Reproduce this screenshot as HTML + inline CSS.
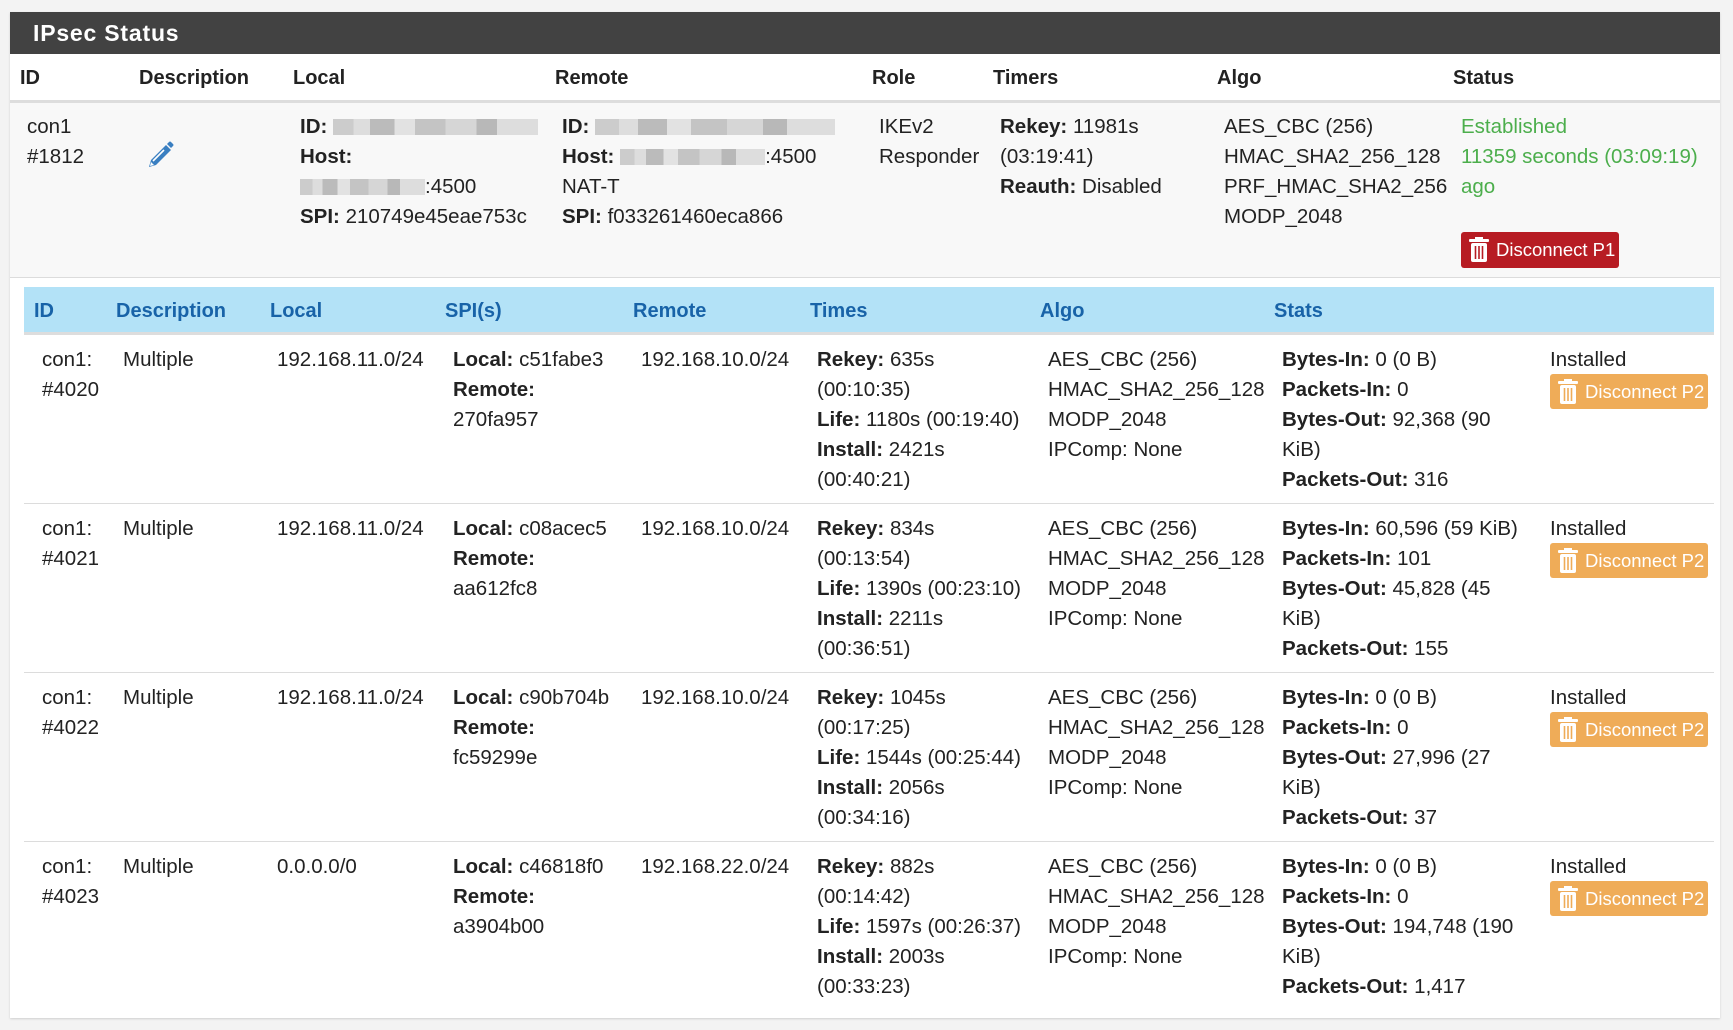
<!DOCTYPE html>
<html><head><meta charset="utf-8"><style>
body{margin:0;width:1733px;height:1030px;background:#f3f3f3;font-family:"Liberation Sans",Arial,sans-serif;color:#222;position:relative;overflow:hidden}
.a{position:absolute;white-space:nowrap;font-size:20.5px;line-height:30px;letter-spacing:0}
b{font-weight:bold}
.h{font-weight:bold;font-size:20px}
.sh{color:#1863a8;font-weight:bold;font-size:20px}
.g{color:#4cae4c}
.btn{position:absolute;border-radius:3px;color:#fff;font-size:18.5px;line-height:35px;white-space:nowrap}
.btn svg{position:absolute;left:7px;top:5px}
.bl{position:absolute;background:#dcdcdc;height:1px}
.blur{display:inline-block;height:16px;vertical-align:-2px;background:linear-gradient(90deg,#ccc 0 10%,#ddd 10% 18%,#bbb 18% 30%,#e2e2e2 30% 40%,#c4c4c4 40% 55%,#d6d6d6 55% 70%,#b8b8b8 70% 80%,#ddd 80%)}
</style></head><body>
<div style="position:absolute;left:10px;top:12px;width:1710px;height:1006px;background:#fff;box-shadow:0 1px 2px rgba(0,0,0,.15)"></div>
<div style="position:absolute;left:10px;top:12px;width:1710px;height:42px;background:#424242"></div>
<div class="a" style="left:33px;top:18px;color:#fff;font-weight:bold;font-size:23px;letter-spacing:0.8px">IPsec Status</div>
<div class="a h" style="left:20px;top:63px">ID</div>
<div class="a h" style="left:139px;top:63px">Description</div>
<div class="a h" style="left:293px;top:63px">Local</div>
<div class="a h" style="left:555px;top:63px">Remote</div>
<div class="a h" style="left:872px;top:63px">Role</div>
<div class="a h" style="left:993px;top:63px">Timers</div>
<div class="a h" style="left:1217px;top:63px">Algo</div>
<div class="a h" style="left:1453px;top:63px">Status</div>
<div style="position:absolute;left:10px;top:100px;width:1710px;height:3px;background:#ddd"></div>
<div style="position:absolute;left:10px;top:103px;width:1710px;height:174px;background:#f8f8f8"></div>
<div class="bl" style="left:10px;top:277px;width:1710px"></div>
<div class="a" style="left:27px;top:112px">con1<br>#1812</div>
<svg style="position:absolute;left:145px;top:140px" width="30" height="30" viewBox="0 0 30 30"><path d="M4 27 L6 20 L21 5 L26 10 L11 25 Z" fill="#3a7fc1"/><path d="M22 4 L24 2 Q25 1 26 2 L28 4 Q29 5 28 6 L26 8 Z" fill="#3a7fc1"/><path d="M8 21 L19 10" stroke="#fff" stroke-width="1.6"/><path d="M5 26 L6 22 L9 25 Z" fill="#fff"/></svg>
<div class="a" style="left:300px;top:112px"><b>ID:</b> <span class="blur" style="width:205px"></span><br><b>Host:</b><br><span class="blur" style="width:125px"></span>:4500<br><b>SPI:</b> 210749e45eae753c</div>
<div class="a" style="left:562px;top:112px"><b>ID:</b> <span class="blur" style="width:240px"></span><br><b>Host:</b> <span class="blur" style="width:145px"></span>:4500<br>NAT-T<br><b>SPI:</b> f033261460eca866</div>
<div class="a" style="left:879px;top:112px">IKEv2<br>Responder</div>
<div class="a" style="left:1000px;top:112px"><b>Rekey:</b> 11981s<br>(03:19:41)<br><b>Reauth:</b> Disabled</div>
<div class="a" style="left:1224px;top:112px">AES_CBC (256)<br>HMAC_SHA2_256_128<br>PRF_HMAC_SHA2_256<br>MODP_2048</div>
<div class="a g" style="left:1461px;top:112px">Established<br>11359 seconds (03:09:19)<br>ago</div>
<div class="btn" style="left:1461px;top:232px;width:158px;height:36px;background:#b71c23"><svg width="22" height="26" viewBox="0 0 22 26"><rect x="7" y="0" width="8" height="3" fill="#fff"/><rect x="1" y="2" width="20" height="3" rx="1" fill="#fff"/><rect x="3" y="6" width="16" height="19" rx="2" fill="#fff"/><path d="M7.5 9v13M11 9v13M14.5 9v13" stroke="#b71c23" stroke-width="1.6"/></svg><span style="position:absolute;left:35px">Disconnect P1</span></div>

<div style="position:absolute;left:24px;top:287px;width:1690px;height:45px;background:#b3e2f7"></div>
<div style="position:absolute;left:24px;top:332px;width:1690px;height:3px;background:#ddd"></div>
<div class="a sh" style="left:34px;top:296px">ID</div>
<div class="a sh" style="left:116px;top:296px">Description</div>
<div class="a sh" style="left:270px;top:296px">Local</div>
<div class="a sh" style="left:445px;top:296px">SPI(s)</div>
<div class="a sh" style="left:633px;top:296px">Remote</div>
<div class="a sh" style="left:810px;top:296px">Times</div>
<div class="a sh" style="left:1040px;top:296px">Algo</div>
<div class="a sh" style="left:1274px;top:296px">Stats</div>

<div class="bl" style="left:24px;top:503px;width:1690px"></div>
<div class="bl" style="left:24px;top:672px;width:1690px"></div>
<div class="bl" style="left:24px;top:841px;width:1690px"></div>

<div class="a" style="left:42px;top:345px">con1:<br>#4020</div>
<div class="a" style="left:123px;top:345px">Multiple</div>
<div class="a" style="left:277px;top:345px">192.168.11.0/24</div>
<div class="a" style="left:453px;top:345px"><b>Local:</b> c51fabe3<br><b>Remote:</b><br>270fa957</div>
<div class="a" style="left:641px;top:345px">192.168.10.0/24</div>
<div class="a" style="left:817px;top:345px"><b>Rekey:</b> 635s<br>(00:10:35)<br><b>Life:</b> 1180s (00:19:40)<br><b>Install:</b> 2421s<br>(00:40:21)</div>
<div class="a" style="left:1048px;top:345px">AES_CBC (256)<br>HMAC_SHA2_256_128<br>MODP_2048<br>IPComp: None</div>
<div class="a" style="left:1282px;top:345px"><b>Bytes-In:</b> 0 (0 B)<br><b>Packets-In:</b> 0<br><b>Bytes-Out:</b> 92,368 (90<br>KiB)<br><b>Packets-Out:</b> 316</div>
<div class="a" style="left:1550px;top:345px">Installed</div>

<div class="a" style="left:42px;top:514px">con1:<br>#4021</div>
<div class="a" style="left:123px;top:514px">Multiple</div>
<div class="a" style="left:277px;top:514px">192.168.11.0/24</div>
<div class="a" style="left:453px;top:514px"><b>Local:</b> c08acec5<br><b>Remote:</b><br>aa612fc8</div>
<div class="a" style="left:641px;top:514px">192.168.10.0/24</div>
<div class="a" style="left:817px;top:514px"><b>Rekey:</b> 834s<br>(00:13:54)<br><b>Life:</b> 1390s (00:23:10)<br><b>Install:</b> 2211s<br>(00:36:51)</div>
<div class="a" style="left:1048px;top:514px">AES_CBC (256)<br>HMAC_SHA2_256_128<br>MODP_2048<br>IPComp: None</div>
<div class="a" style="left:1282px;top:514px"><b>Bytes-In:</b> 60,596 (59 KiB)<br><b>Packets-In:</b> 101<br><b>Bytes-Out:</b> 45,828 (45<br>KiB)<br><b>Packets-Out:</b> 155</div>
<div class="a" style="left:1550px;top:514px">Installed</div>

<div class="a" style="left:42px;top:683px">con1:<br>#4022</div>
<div class="a" style="left:123px;top:683px">Multiple</div>
<div class="a" style="left:277px;top:683px">192.168.11.0/24</div>
<div class="a" style="left:453px;top:683px"><b>Local:</b> c90b704b<br><b>Remote:</b><br>fc59299e</div>
<div class="a" style="left:641px;top:683px">192.168.10.0/24</div>
<div class="a" style="left:817px;top:683px"><b>Rekey:</b> 1045s<br>(00:17:25)<br><b>Life:</b> 1544s (00:25:44)<br><b>Install:</b> 2056s<br>(00:34:16)</div>
<div class="a" style="left:1048px;top:683px">AES_CBC (256)<br>HMAC_SHA2_256_128<br>MODP_2048<br>IPComp: None</div>
<div class="a" style="left:1282px;top:683px"><b>Bytes-In:</b> 0 (0 B)<br><b>Packets-In:</b> 0<br><b>Bytes-Out:</b> 27,996 (27<br>KiB)<br><b>Packets-Out:</b> 37</div>
<div class="a" style="left:1550px;top:683px">Installed</div>

<div class="a" style="left:42px;top:852px">con1:<br>#4023</div>
<div class="a" style="left:123px;top:852px">Multiple</div>
<div class="a" style="left:277px;top:852px">0.0.0.0/0</div>
<div class="a" style="left:453px;top:852px"><b>Local:</b> c46818f0<br><b>Remote:</b><br>a3904b00</div>
<div class="a" style="left:641px;top:852px">192.168.22.0/24</div>
<div class="a" style="left:817px;top:852px"><b>Rekey:</b> 882s<br>(00:14:42)<br><b>Life:</b> 1597s (00:26:37)<br><b>Install:</b> 2003s<br>(00:33:23)</div>
<div class="a" style="left:1048px;top:852px">AES_CBC (256)<br>HMAC_SHA2_256_128<br>MODP_2048<br>IPComp: None</div>
<div class="a" style="left:1282px;top:852px"><b>Bytes-In:</b> 0 (0 B)<br><b>Packets-In:</b> 0<br><b>Bytes-Out:</b> 194,748 (190<br>KiB)<br><b>Packets-Out:</b> 1,417</div>
<div class="a" style="left:1550px;top:852px">Installed</div>

<div class="btn" style="left:1550px;top:374px;width:158px;height:35px;background:#efac58"><svg width="22" height="26" viewBox="0 0 22 26"><rect x="7" y="0" width="8" height="3" fill="#fff"/><rect x="1" y="2" width="20" height="3" rx="1" fill="#fff"/><rect x="3" y="6" width="16" height="19" rx="2" fill="#fff"/><path d="M7.5 9v13M11 9v13M14.5 9v13" stroke="#efac58" stroke-width="1.6"/></svg><span style="position:absolute;left:35px">Disconnect P2</span></div>
<div class="btn" style="left:1550px;top:543px;width:158px;height:35px;background:#efac58"><svg width="22" height="26" viewBox="0 0 22 26"><rect x="7" y="0" width="8" height="3" fill="#fff"/><rect x="1" y="2" width="20" height="3" rx="1" fill="#fff"/><rect x="3" y="6" width="16" height="19" rx="2" fill="#fff"/><path d="M7.5 9v13M11 9v13M14.5 9v13" stroke="#efac58" stroke-width="1.6"/></svg><span style="position:absolute;left:35px">Disconnect P2</span></div>
<div class="btn" style="left:1550px;top:712px;width:158px;height:35px;background:#efac58"><svg width="22" height="26" viewBox="0 0 22 26"><rect x="7" y="0" width="8" height="3" fill="#fff"/><rect x="1" y="2" width="20" height="3" rx="1" fill="#fff"/><rect x="3" y="6" width="16" height="19" rx="2" fill="#fff"/><path d="M7.5 9v13M11 9v13M14.5 9v13" stroke="#efac58" stroke-width="1.6"/></svg><span style="position:absolute;left:35px">Disconnect P2</span></div>
<div class="btn" style="left:1550px;top:881px;width:158px;height:35px;background:#efac58"><svg width="22" height="26" viewBox="0 0 22 26"><rect x="7" y="0" width="8" height="3" fill="#fff"/><rect x="1" y="2" width="20" height="3" rx="1" fill="#fff"/><rect x="3" y="6" width="16" height="19" rx="2" fill="#fff"/><path d="M7.5 9v13M11 9v13M14.5 9v13" stroke="#efac58" stroke-width="1.6"/></svg><span style="position:absolute;left:35px">Disconnect P2</span></div>
</body></html>
